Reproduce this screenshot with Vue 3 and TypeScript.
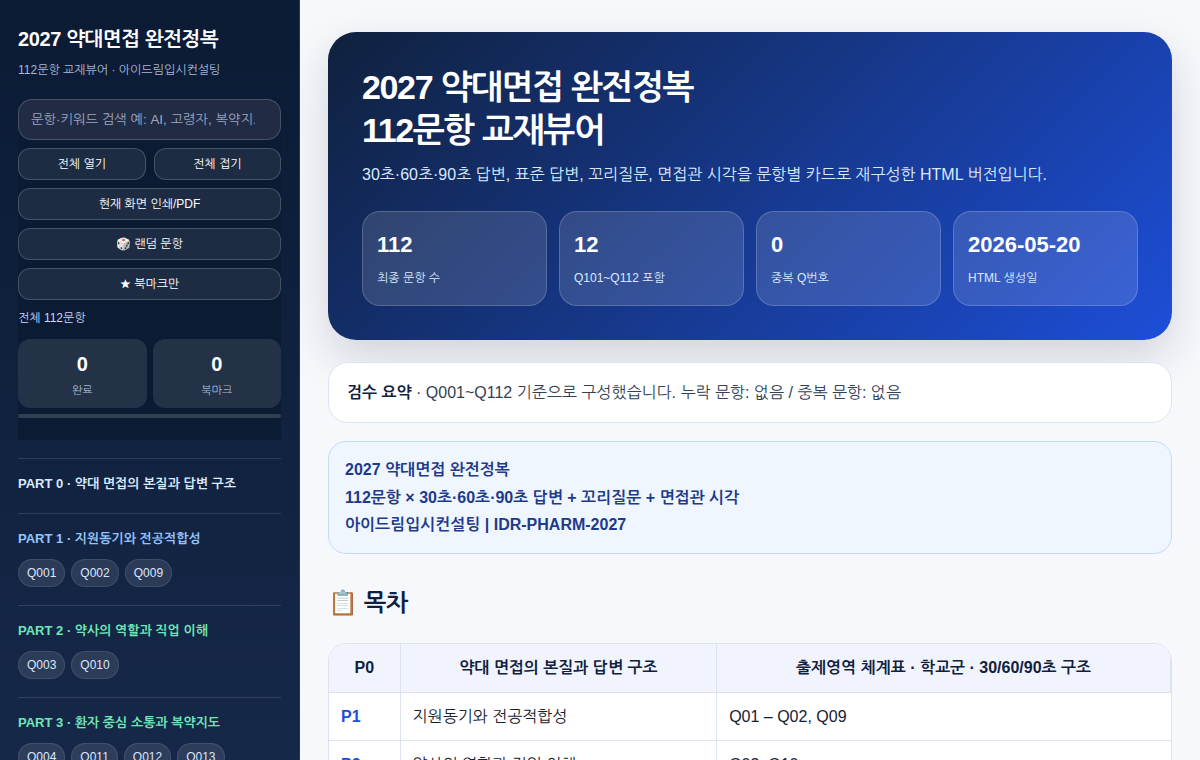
<script setup lang="ts">
import { ref } from 'vue'

interface Part {
  title: string
  tone: 'plain' | 'blue' | 'green'
  questions: string[]
}

const keyword = ref('')

const parts: Part[] = [
  { title: 'PART 0 · 약대 면접의 본질과 답변 구조', tone: 'plain', questions: [] },
  { title: 'PART 1 · 지원동기와 전공적합성', tone: 'blue', questions: ['Q001', 'Q002', 'Q009'] },
  { title: 'PART 2 · 약사의 역할과 직업 이해', tone: 'green', questions: ['Q003', 'Q010'] },
  { title: 'PART 3 · 환자 중심 소통과 복약지도', tone: 'green', questions: ['Q004', 'Q011', 'Q012', 'Q013'] },
]

const metrics = [
  { value: '112', label: '최종 문항 수' },
  { value: '12', label: 'Q101~Q112 포함' },
  { value: '0', label: '중복 Q번호' },
  { value: '2026-05-20', label: 'HTML 생성일' },
]

const rows = [
  { part: 'P1', topic: '지원동기와 전공적합성', range: 'Q01 – Q02, Q09' },
  { part: 'P2', topic: '약사의 역할과 직업 이해', range: 'Q03, Q10' },
]
</script>

<template>
  <div class="layout" lang="ko">
    <aside class="sidebar">
      <h1 class="brand">2027 약대면접 완전정복</h1>
      <p class="brand-sub">112문항 교재뷰어 · 아이드림입시컨설팅</p>

      <div class="tools">
        <input
          v-model="keyword"
          class="search"
          type="search"
          aria-label="문항·키워드 검색"
          placeholder="문항·키워드 검색 예: AI, 고령자, 복약지."
        />
        <div class="pair">
          <button type="button" class="btn">전체 열기</button>
          <button type="button" class="btn">전체 접기</button>
        </div>
        <button type="button" class="btn">현재 화면 인쇄/PDF</button>
        <button type="button" class="btn">🎲 랜덤 문항</button>
        <button type="button" class="btn">★ 북마크만</button>
        <div class="status">전체 112문항</div>
        <div class="counts">
          <div class="count"><b>0</b><span>완료</span></div>
          <div class="count"><b>0</b><span>북마크</span></div>
        </div>
        <div class="progress"></div>
      </div>

      <nav>
        <section v-for="p in parts" :key="p.title" class="part">
          <h3 :class="p.tone">{{ p.title }}</h3>
          <div v-if="p.questions.length" class="chips">
            <a v-for="q in p.questions" :key="q" :href="'#' + q">{{ q }}</a>
          </div>
        </section>
      </nav>
    </aside>

    <main class="main">
      <header class="hero">
        <h2 class="hero-title">2027 약대면접 완전정복<br />112문항 교재뷰어</h2>
        <p>30초·60초·90초 답변, 표준 답변, 꼬리질문, 면접관 시각을 문항별 카드로 재구성한 HTML 버전입니다.</p>
        <div class="metrics">
          <div v-for="m in metrics" :key="m.label" class="metric">
            <b>{{ m.value }}</b>
            <span>{{ m.label }}</span>
          </div>
        </div>
      </header>

      <section class="summary">
        <strong>검수 요약</strong> · Q001~Q112 기준으로 구성했습니다. 누락 문항: 없음 / 중복 문항: 없음
      </section>

      <section class="callout">
        2027 약대면접 완전정복<br />
        112문항 × 30초·60초·90초 답변 + 꼬리질문 + 면접관 시각<br />
        아이드림입시컨설팅 | IDR-PHARM-2027
      </section>

      <h2 class="toc-title">📋 목차</h2>
      <table class="toc">
        <thead>
          <tr>
            <th class="c-part">P0</th>
            <th class="c-topic">약대 면접의 본질과 답변 구조</th>
            <th>출제영역 체계표 · 학교군 · 30/60/90초 구조</th>
          </tr>
        </thead>
        <tbody>
          <tr v-for="r in rows" :key="r.part">
            <td><strong>{{ r.part }}</strong></td>
            <td>{{ r.topic }}</td>
            <td>{{ r.range }}</td>
          </tr>
        </tbody>
      </table>
    </main>
  </div>
</template>

<style>
html {
  scrollbar-width: none;
}
body {
  margin: 0;
  background: #f7f8fc;
}
</style>

<style scoped>
* {
  box-sizing: border-box;
}
.layout {
  display: grid;
  grid-template-columns: 300px minmax(0, 1fr);
  font-family: 'Liberation Sans', NanumGothic, 'Noto Sans CJK KR', sans-serif;
  font-size: 16px;
  line-height: 1.72;
  color: #172033;
}
h1,
h2,
h3,
p {
  margin: 0;
}
.sidebar {
  position: sticky;
  top: 0;
  height: 100vh;
  overflow-y: auto;
  scrollbar-width: none;
  padding: 22px 18px;
  background: linear-gradient(180deg, #0b1b34, #162849);
  border-right: 1px solid #253756;
  color: #dbe7ff;
}
.brand {
  font-size: 20px;
  letter-spacing: -0.02em;
  color: #fff;
}
.brand-sub {
  margin: 4px 0 18px;
  font-size: 12px;
  color: #a8b8d8;
}
.tools {
  display: flex;
  flex-direction: column;
  gap: 8px;
  padding-bottom: 22px;
  background: #0b1b33;
}
.search {
  width: 100%;
  padding: 12px;
  border: 1px solid rgba(255, 255, 255, 0.18);
  border-radius: 14px;
  background: #212c44;
  color: #fff;
  font-family: inherit;
  appearance: none;
  outline: none;
}
.search::placeholder {
  color: #9ba7c2;
}
.pair {
  display: grid;
  grid-template-columns: 1fr 1fr;
  gap: 8px;
}
.btn {
  height: 32px;
  padding: 0 10px;
  border: 1px solid rgba(255, 255, 255, 0.18);
  border-radius: 12px;
  background: rgba(255, 255, 255, 0.08);
  color: #fff;
  font-family: inherit;
  font-size: 12px;
  cursor: pointer;
}
.status {
  font-size: 12px;
  color: #cbd8f2;
}
.counts {
  display: grid;
  grid-template-columns: 1fr 1fr;
  gap: 6px;
  margin-top: 2px;
}
.count {
  display: flex;
  flex-direction: column;
  padding: 8px;
  border-radius: 12px;
  background: rgba(255, 255, 255, 0.1);
  text-align: center;
}
.count b {
  font-size: 20px;
  color: #fff;
}
.count span {
  font-size: 11px;
  color: #a8b8d8;
}
.progress {
  height: 4px;
  margin-top: -2px;
  border-radius: 4px;
  background: rgba(255, 255, 255, 0.16);
}
.part {
  margin-top: 18px;
  padding-top: 14px;
  border-top: 1px solid rgba(255, 255, 255, 0.12);
}
.part h3 {
  font-size: 13px;
}
.plain {
  color: #dbeafe;
}
.blue {
  color: #93c5fd;
}
.green {
  color: #6ee7b7;
}
.chips {
  display: flex;
  flex-wrap: wrap;
  gap: 6px;
  margin-top: 8px;
}
.chips a {
  padding: 3px 8px;
  border: 1px solid rgba(255, 255, 255, 0.1);
  border-radius: 999px;
  background: rgba(255, 255, 255, 0.1);
  color: #dbe7ff;
  font-size: 12px;
  text-decoration: none;
}
.main {
  padding: 32px 28px;
}
.hero {
  padding: 34px;
  border-radius: 28px;
  background: linear-gradient(135deg, #10213d, #1d4ed8);
  box-shadow: 0 18px 45px rgba(15, 23, 42, 0.16);
  color: #fff;
}
.hero-title {
  font-size: 34px;
  line-height: 1.25;
  letter-spacing: -0.04em;
}
.hero p {
  margin-top: 10px;
  color: #dbeafe;
}
.metrics {
  display: grid;
  grid-template-columns: repeat(4, 1fr);
  gap: 12px;
  margin-top: 22px;
}
.metric {
  padding: 14px;
  border: 1px solid rgba(255, 255, 255, 0.18);
  border-radius: 18px;
  background: rgba(255, 255, 255, 0.13);
}
.metric b {
  display: block;
  font-size: 22px;
}
.metric span {
  font-size: 12px;
  color: #dbeafe;
}
.summary {
  margin-top: 22px;
  padding: 16px 18px;
  border: 1px solid #dbe3f1;
  border-radius: 20px;
  background: #fff;
  color: #334155;
}
.summary strong {
  color: #10213f;
}
.callout {
  margin-top: 18px;
  padding: 14px 16px;
  border: 1px solid #bfdbfe;
  border-radius: 18px;
  background: #eff6ff;
  color: #1e3a8a;
  font-weight: 700;
}
.toc-title {
  margin: 28px 0 20px;
  font-size: 24px;
  letter-spacing: -0.02em;
  color: #10213f;
}
.toc {
  width: 100%;
  border: 1px solid #dbe3f1;
  border-radius: 18px;
  border-spacing: 0;
  overflow: hidden;
  background: #fff;
}
.toc th,
.toc td {
  padding: 10px 12px;
  border-right: 1px solid #dbe3f1;
  border-bottom: 1px solid #dbe3f1;
}
.toc td:last-child {
  border-right: 0;
}
.toc th {
  background: #f1f4fc;
  color: #10213f;
}
.toc td strong {
  color: #1d4ed8;
}
.c-part {
  width: 8.5%;
}
.c-topic {
  width: 37.6%;
}
</style>
